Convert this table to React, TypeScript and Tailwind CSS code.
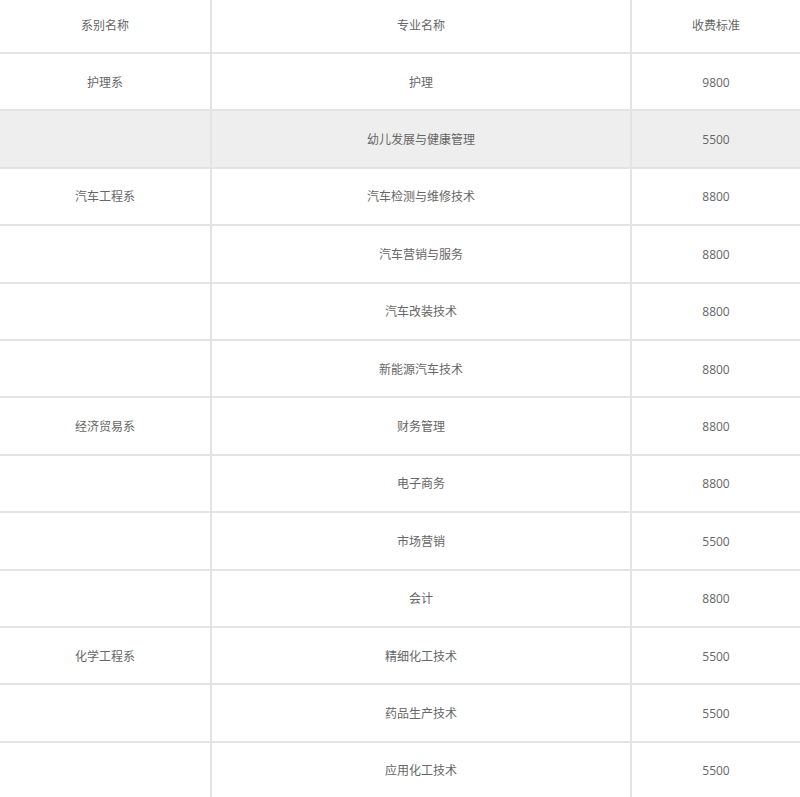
import React from "react";

const rows: [string, string, string][] = [
  ["护理系", "护理", "9800"],
  ["", "幼儿发展与健康管理", "5500"],
  ["汽车工程系", "汽车检测与维修技术", "8800"],
  ["", "汽车营销与服务", "8800"],
  ["", "汽车改装技术", "8800"],
  ["", "新能源汽车技术", "8800"],
  ["经济贸易系", "财务管理", "8800"],
  ["", "电子商务", "8800"],
  ["", "市场营销", "5500"],
  ["", "会计", "8800"],
  ["化学工程系", "精细化工技术", "5500"],
  ["", "药品生产技术", "5500"],
  ["", "应用化工技术", "5500"],
];

export default function App() {
  return (
    <div
      className="w-[800px] h-[797px] overflow-hidden bg-white text-[12px] text-[#666]"
      style={{ fontFamily: '"Open Sans", "Noto Sans CJK SC", sans-serif' }}
    >
      <div className="grid grid-cols-[212px_420px_1fr] h-[54px] border-b-2 border-[#e3e3e3]">
        <div className="flex items-center justify-center border-r-2 border-[#e3e3e3] pb-[1px]">系别名称</div>
        <div className="flex items-center justify-center border-r-2 border-[#e3e3e3] pb-[1px]">专业名称</div>
        <div className="flex items-center justify-center pb-[1px]">收费标准</div>
      </div>
      {rows.map((r, i) => (
        <div
          key={i}
          className={
            "grid grid-cols-[212px_420px_1fr] h-[57.4px] border-b-2 border-[#e3e3e3] " +
            (i === 1 ? "bg-[#eeeeee]" : "bg-white")
          }
        >
          <div className="flex items-center justify-center border-r-2 border-[#e3e3e3] pt-[2px]">{r[0]}</div>
          <div className="flex items-center justify-center border-r-2 border-[#e3e3e3] pt-[2px]">{r[1]}</div>
          <div className="flex items-center justify-center pt-[2px]">{r[2]}</div>
        </div>
      ))}
    </div>
  );
}
